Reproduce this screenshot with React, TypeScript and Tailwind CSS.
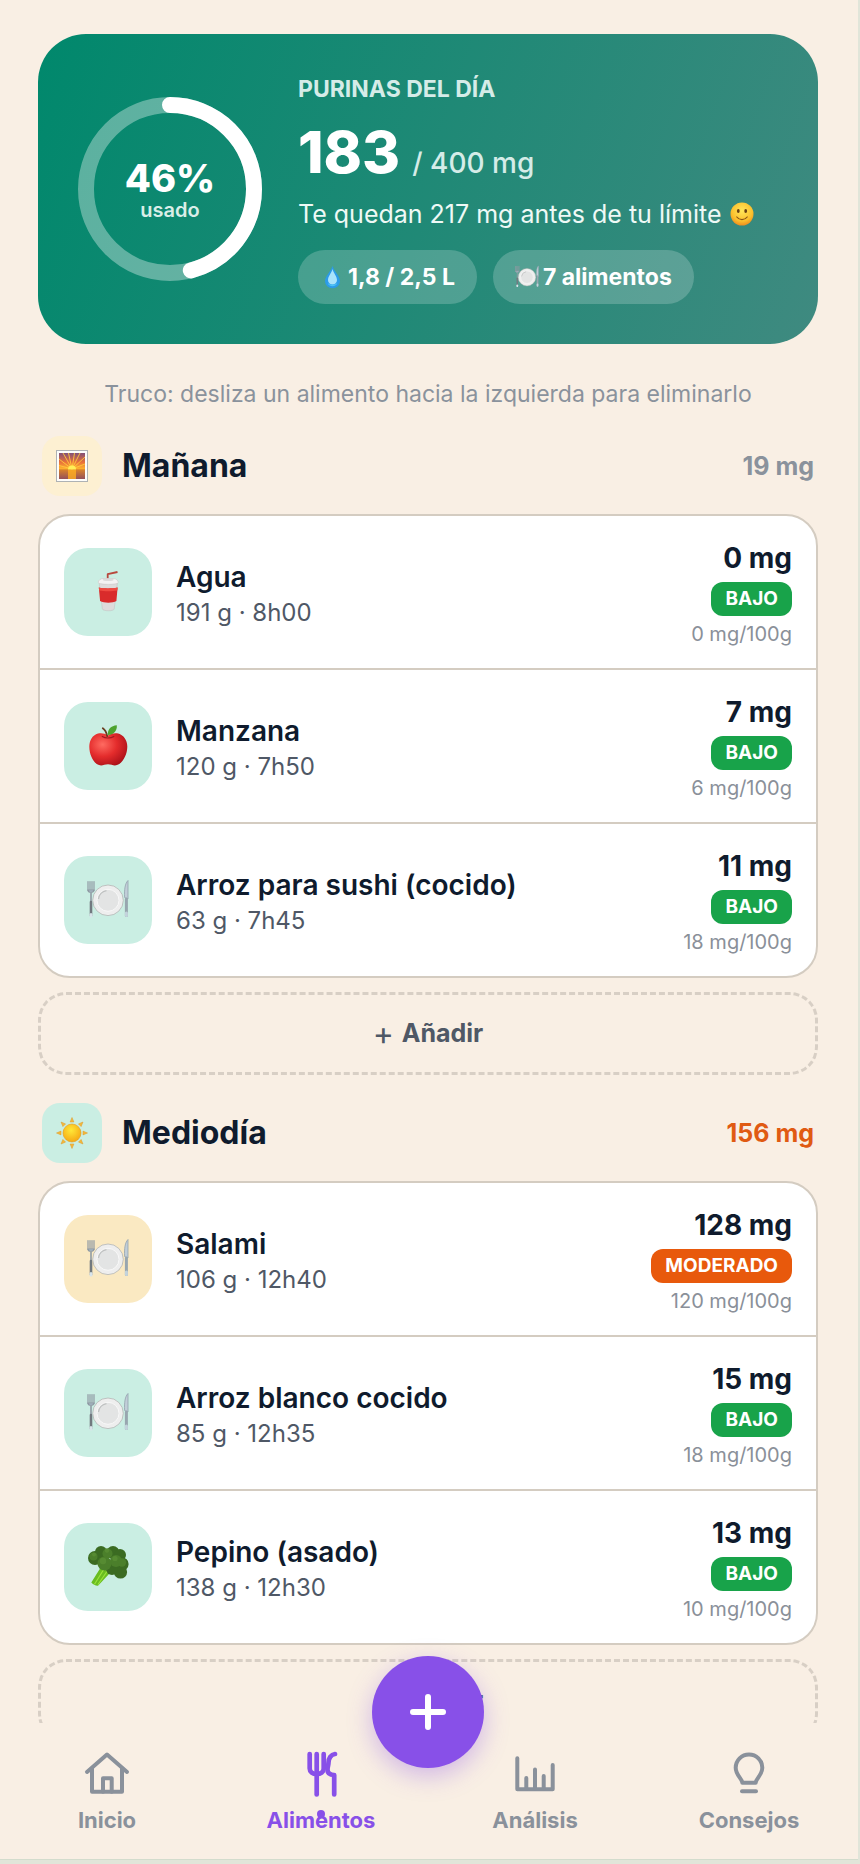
import { ReactNode } from 'react';
import { clsx } from 'clsx';

type Level = 'low' | 'moderate';

type Food = {
  name: string;
  detail: string;
  mg: string;
  per100: string;
  level: Level;
  icon: ReactNode;
};

function Plate({ className }: { className: string }) {
  return (
    <svg viewBox="0 0 42 42" className={className} aria-hidden="true">
      <g fill="none" stroke="#8f9aa3" strokeLinecap="round">
        <path d="M1 2.5v9M3 2.5v9M5 2.5v9M7 2.5v9" strokeWidth="1.2" />
        <path d="M1 11c0 3 6 3 6 0z" fill="#a9bccb" strokeWidth="1.2" />
        <path d="M4 14v9" strokeWidth="1.6" />
        <path d="M4 23v13.5" stroke="#71797f" strokeWidth="2.6" />
      </g>
      <path d="M4 35.5v1.500" stroke="#d8e4ea" strokeWidth="3" strokeLinecap="round" />
      <circle cx="21" cy="21.3" r="15.3" fill="#eeeeee" stroke="#b4b6b5" strokeWidth="0.8" />
      <circle cx="21" cy="21.3" r="11" fill="#e3e4e4" stroke="#f8f8f8" strokeWidth="1" />
      <path d="M11.5 20a9.6 9.6 0 0 1 8-8.3" fill="none" stroke="#bfc1c1" strokeWidth="1.3" />
      <path d="M41 1.5c-3 3-3.8 9-3.4 17l3.4 1.5z" fill="#c1ced8" stroke="#93a2ad" strokeWidth="0.8" />
      <path d="M39.4 20v16.5" stroke="#98a6af" strokeWidth="3" strokeLinecap="round" />
      <path d="M39.4 34v2.5" stroke="#c3d3dc" strokeWidth="3" strokeLinecap="round" />
    </svg>
  );
}

function Cup() {
  return (
    <svg viewBox="0 0 42 42" className="size-[42px]" aria-hidden="true">
      <path d="M20.7 9V3.2L30.5 1" fill="none" stroke="#b8473c" strokeWidth="1.8" strokeLinejoin="round" />
      <path d="M12.2 12h18.2l-3.2 26c-.3 2.3-11.4 2.3-11.8 0z" fill="#dedbdb" stroke="#c4c4c4" strokeWidth="0.6" />
      <path d="M11.8 16.5c5 1.2 13 1.2 18.8 0l-1.200 13.500c-3.500 2.200-12.500 2.200-16.300 0z" fill="#d92b2b" />
      <path d="M11.8 16.5c5 1.2 13 1.2 18.8 0l-.3 3c-5 1-13 1-18.200 0z" fill="#ef4a41" />
      <path d="M11.2 11.5c0-2 2.3-4 4.8-4h10.5c2.5 0 4.8 2 4.8 4 0 2.5-20.1 2.5-20.1 0z" fill="#f4f3f3" stroke="#c9c6c6" strokeWidth="0.6" />
      <ellipse cx="21.2" cy="8.8" rx="5.5" ry="1.2" fill="#dcdada" />
    </svg>
  );
}

function Apple() {
  return (
    <svg viewBox="0 0 42 42" className="size-[42px]" aria-hidden="true">
      <defs>
        <radialGradient id="apple" cx="35%" cy="35%" r="75%">
          <stop offset="0" stopColor="#ff6b61" />
          <stop offset="0.5" stopColor="#e42c2c" />
          <stop offset="1" stopColor="#a80f18" />
        </radialGradient>
      </defs>
      <path
        d="M21 10.5c4-2.5 9-3 13-.7 4 2.3 6.3 6.7 6.3 12 0 8-4.8 16.5-10.3 18.3-3.3 1-5.5-.8-9-.8s-5.7 1.8-9 .8C6.5 38.3 2.3 29.8 2.3 21.800c0-5.300 2-9.700 6-12 4-2.300 8.700-1.800 12.700.7z"
        fill="url(#apple)"
      />
      <path d="M15.3 11.5c3 2 8.5 2 11.5 0" fill="none" stroke="#a01820" strokeWidth="1.2" strokeLinecap="round" />
      <path d="M15.8 3.2c2 1.3 3.7 4.3 4.4 8" fill="none" stroke="#6b3d20" strokeWidth="1.8" strokeLinecap="round" />
      <path d="M20.8 10C20.5 4 24 .8 29.8.2c.7 5-3 9.6-9 9.8z" fill="#4da32f" />
    </svg>
  );
}

function Broccoli() {
  return (
    <svg viewBox="0 0 42 42" className="size-[42px]" aria-hidden="true">
      <path d="M14 21L4.3 36.5c1.5 2 4.5 3.5 6.7 3.3L22 28l7-5z" fill="#69bd20" />
      <path d="M17 23L7.5 38.2M21 24L11 38.5" stroke="#9be23c" strokeWidth="1.2" />
      <g fill="#3b6b22">
        <circle cx="8" cy="12" r="7" />
        <circle cx="14" cy="6" r="6" />
        <circle cx="26" cy="6.5" r="6.5" />
        <circle cx="33" cy="9" r="6" />
        <circle cx="35" cy="18" r="6.6" />
        <circle cx="33.5" cy="26" r="6.6" />
        <circle cx="25" cy="23" r="6" />
      </g>
      <g fill="#4b7f2b">
        <circle cx="20.5" cy="7.5" r="5" />
        <circle cx="6.5" cy="10.5" r="4" />
        <circle cx="29" cy="15" r="6" />
        <circle cx="17.5" cy="17.5" r="7" />
        <circle cx="35" cy="16.5" r="4.2" />
      </g>
      <g fill="#5c9136" opacity="0.7">
        <circle cx="16" cy="15" r="3.2" />
        <circle cx="28" cy="12.5" r="2.6" />
        <circle cx="20" cy="4.5" r="2.2" />
        <circle cx="7" cy="8.5" r="2" />
      </g>
    </svg>
  );
}

function Sunrise() {
  return (
    <svg viewBox="0 0 32 32" className="size-8" aria-hidden="true">
      <defs>
        <linearGradient id="dawn" x1="0" y1="0" x2="0" y2="1">
          <stop offset="0" stopColor="#805078" />
          <stop offset="0.35" stopColor="#e8703a" />
          <stop offset="0.62" stopColor="#ffb52e" />
          <stop offset="0.64" stopColor="#d9822b" />
          <stop offset="1" stopColor="#94505a" />
        </linearGradient>
      </defs>
      <rect x="0.5" y="0.5" width="31" height="31" fill="#fdfdfb" stroke="#aeb2b4" />
      <rect x="3" y="3" width="26" height="26" fill="url(#dawn)" />
      <path
        d="M16 19L3 15.5M16 19L3 9M16 19L7 3M16 19L12.5 3M16 19L18.5 3M16 19L24 3M16 19L29 7M16 19l13-5"
        stroke="#ffc83c"
        strokeWidth="0.9"
      />
      <path d="M12 19.5a4 4 0 0 1 8 0z" fill="#ffee58" />
      <path d="M12 20h8v9h-8z" fill="#ffae22" opacity="0.8" />
    </svg>
  );
}

function Sun() {
  return (
    <svg viewBox="0 0 32 32" className="size-8" aria-hidden="true">
      <defs>
        <radialGradient id="sun" cx="45%" cy="35%" r="65%">
          <stop offset="0" stopColor="#ffe838" />
          <stop offset="1" stopColor="#f6a914" />
        </radialGradient>
      </defs>
      {[0, 45, 90, 135, 180, 225, 270, 315].map((angle) => (
        <path key={angle} d="M16 0.5l1.9 4.5h-3.8z" fill="#f5b93a" stroke="#dc9a2c" strokeWidth="0.5" transform={`rotate(${angle} 16 16)`} />
      ))}
      <circle cx="16" cy="16" r="9" fill="url(#sun)" stroke="#e29a1c" strokeWidth="0.6" />
    </svg>
  );
}

function Drop() {
  return (
    <svg viewBox="0 0 24 24" className="size-6" aria-hidden="true">
      <path d="M12.5 1C14 6.5 20 11 20 16.2a7.5 7 0 0 1-15 0C5 11 11 6.5 12.5 1z" fill="#2c9be8" />
      <path d="M12.5 4c1 4 4.5 7.5 4.5 11a4.5 4.5 0 0 1-9 0c0-3.5 3.5-7 4.5-11z" fill="#a9e3fb" />
      <path d="M7.5 17.5c1.5 3 8.5 3 10 0-1 5-9 5-10 0z" fill="#4cc4f8" />
    </svg>
  );
}

function Smiley() {
  return (
    <svg viewBox="0 0 24 24" className="size-6" aria-hidden="true">
      <defs>
        <radialGradient id="smiley" cx="50%" cy="35%" r="65%">
          <stop offset="0" stopColor="#ffe65a" />
          <stop offset="0.7" stopColor="#fbc02d" />
          <stop offset="1" stopColor="#ee8e1e" />
        </radialGradient>
      </defs>
      <circle cx="12" cy="12" r="11.5" fill="url(#smiley)" />
      <ellipse cx="8.3" cy="9" rx="1.4" ry="2" fill="#6a4012" />
      <ellipse cx="15.7" cy="9" rx="1.4" ry="2" fill="#6a4012" />
      <path d="M6.8 15c2.5 3.4 7.9 3.4 10.4 0" fill="none" stroke="#8a5416" strokeWidth="1.2" strokeLinecap="round" />
    </svg>
  );
}

const morning: Food[] = [
  { name: 'Agua', detail: '191 g · 8h00', mg: '0 mg', per100: '0 mg/100g', level: 'low', icon: <Cup /> },
  { name: 'Manzana', detail: '120 g · 7h50', mg: '7 mg', per100: '6 mg/100g', level: 'low', icon: <Apple /> },
  { name: 'Arroz para sushi (cocido)', detail: '63 g · 7h45', mg: '11 mg', per100: '18 mg/100g', level: 'low', icon: <Plate className="size-[42px]" /> },
];

const noon: Food[] = [
  { name: 'Salami', detail: '106 g · 12h40', mg: '128 mg', per100: '120 mg/100g', level: 'moderate', icon: <Plate className="size-[42px]" /> },
  { name: 'Arroz blanco cocido', detail: '85 g · 12h35', mg: '15 mg', per100: '18 mg/100g', level: 'low', icon: <Plate className="size-[42px]" /> },
  { name: 'Pepino (asado)', detail: '138 g · 12h30', mg: '13 mg', per100: '10 mg/100g', level: 'low', icon: <Broccoli /> },
];

function FoodRow({ food }: { food: Food }) {
  const moderate = food.level === 'moderate';
  return (
    <li className="flex h-[154px] items-center gap-6 border-b-2 border-[#d4ccc1] px-6 last:h-[152px] last:border-b-0">
      <div className={clsx('flex size-[88px] shrink-0 items-center justify-center rounded-3xl', moderate ? 'bg-[#fae9c2]' : 'bg-[#caeee3]')}>
        {food.icon}
      </div>
      <div className="min-w-0 flex-1 pt-1.5">
        <h3 className="text-[28px] leading-9 font-semibold text-[#0f1b2d]">{food.name}</h3>
        <p className="text-2xl leading-9 text-[#4f5866]">{food.detail}</p>
      </div>
      <div className="flex flex-col items-end pt-0.5">
        <span className="text-[28px] leading-10 font-bold text-[#0f1b2d]">{food.mg}</span>
        <span className={clsx('mt-1 flex h-[34px] items-center rounded-xl px-3.5 text-[19px] font-bold text-white', moderate ? 'bg-[#e8590c]' : 'bg-[#18a34a]')}>
          {moderate ? 'MODERADO' : 'BAJO'}
        </span>
        <span className="mt-1 text-xl leading-7 text-[#8a9099]">{food.per100}</span>
      </div>
    </li>
  );
}

type MealProps = {
  title: string;
  total: string;
  high?: boolean;
  icon: ReactNode;
  foods: Food[];
};

function Meal({ title, total, high, icon, foods }: MealProps) {
  return (
    <section>
      <div className="flex items-center gap-5 px-1">
        <div className={clsx('flex size-[60px] items-center justify-center rounded-[18px]', high ? 'bg-[#caeee3]' : 'bg-[#fdf0d2]')}>
          {icon}
        </div>
        <h2 className="flex-1 text-[32px] leading-10 font-bold text-[#0f1b2d]">{title}</h2>
        <span className={clsx('text-[25px] leading-9 font-bold', high ? 'text-[#e05a12]' : 'text-[#8a929c]')}>{total}</span>
      </div>
      <ul className="mt-[18px] overflow-hidden rounded-[32px] border-2 border-[#d4ccc1] bg-white">
        {foods.map((food) => (
          <FoodRow key={food.name} food={food} />
        ))}
      </ul>
      <button className="mt-3.5 flex h-[83px] w-full items-center justify-center gap-2 rounded-[28px] border-3 border-dashed border-[#d8cfc5] text-[25px] font-bold text-[#4f5866]">
        <span className="text-[32px] leading-8 font-normal">+</span>
        Añadir
      </button>
    </section>
  );
}

function NavItem({ label, active, children }: { label: string; active?: boolean; children: ReactNode }) {
  return (
    <a
      href="#"
      aria-current={active ? 'page' : undefined}
      className={clsx('relative flex flex-1 flex-col items-center gap-2 pt-[27px] pb-[25px]', active ? 'text-[#8850e8]' : 'text-[#8a919b]')}
    >
      <svg viewBox="0 0 48 48" className="size-12" fill="none" stroke="currentColor" strokeWidth="4" strokeLinecap="round" strokeLinejoin="round" aria-hidden="true">
        {children}
      </svg>
      <span className="text-[22px] leading-7 font-bold">{label}</span>
      {active && <span className="absolute top-[87px] left-1/2 size-2 -translate-x-1/2 rounded-full bg-[#8850e8]" />}
    </a>
  );
}

export default function App() {
  return (
    <div className="h-screen bg-[#e1e5d9] pr-0.5 pb-1 font-['Inter',sans-serif]">
      <div className="flex h-full flex-col border-b border-[#d3dccd] bg-[#f9efe4]">
        <main className="min-h-0 flex-1 overflow-hidden pt-[34px] pr-10 pl-[38px]">
          <section className="flex items-center gap-9 rounded-[48px] bg-linear-110/srgb from-[#00886c] to-[#3f8a80] p-10 text-white">
            <div className="grid size-[184px] shrink-0 place-items-center">
              <svg viewBox="0 0 184 184" className="col-start-1 row-start-1 size-full -rotate-90" fill="none" strokeWidth="16" aria-hidden="true">
                <circle cx="92" cy="92" r="84" stroke="#ffffff" strokeOpacity="0.35" />
                <circle cx="92" cy="92" r="84" stroke="#ffffff" strokeLinecap="round" pathLength="100" strokeDasharray="46 100" />
              </svg>
              <div className="col-start-1 row-start-1 flex flex-col items-center pt-1.5">
                <span className="text-[38px] leading-9 font-extrabold">46%</span>
                <span className="text-xl leading-7 font-semibold text-[#d9eee8]">usado</span>
              </div>
            </div>
            <div className="min-w-0">
              <h1 className="text-[23px] leading-[30px] font-bold text-[#d5ece8]">PURINAS DEL DÍA</h1>
              <p className="mt-3 flex h-[72px] items-baseline gap-3">
                <span className="text-[58px] leading-[72px] font-extrabold">183</span>
                <span className="text-[28px] leading-9 font-medium text-[#d5ece8]">/ 400 mg</span>
              </p>
              <p className="mt-2 flex items-center gap-2 text-[25px] leading-9 text-[#eef9f6]">
                Te quedan 217 mg antes de tu límite <Smiley />
              </p>
              <div className="mt-[18px] flex gap-4 text-[23px] font-bold">
                <span className="flex h-[54px] items-center gap-1 rounded-full bg-white/20 px-[22px]">
                  <Drop /> 1,8 / 2,5 L
                </span>
                <span className="flex h-[54px] items-center gap-1 rounded-full bg-white/20 px-[22px]">
                  <Plate className="size-6" /> 7 alimentos
                </span>
              </div>
            </div>
          </section>

          <p className="mt-8 mb-6 text-center text-[23px] leading-9 text-[#8a929c]">Truco: desliza un alimento hacia la izquierda para eliminarlo</p>

          <div className="flex flex-col gap-7">
            <Meal title="Mañana" total="19 mg" icon={<Sunrise />} foods={morning} />
            <Meal title="Mediodía" total="156 mg" high icon={<Sun />} foods={noon} />
          </div>
        </main>

        <nav className="relative mr-0.5 flex">
          <NavItem label="Inicio">
            <path d="M4 22L24 4.5 44 22" />
            <path d="M9 18.5v23.2h30V18.5" />
            <path d="M20 41.7V28.3h8.7v13.4" />
          </NavItem>
          <NavItem label="Alimentos" active>
            <g strokeWidth="4.7">
              <path d="M12.7 4v14.5c0 3.5 3 5.5 7 5.5s7-2 7-5.5V4" />
              <path d="M19.7 4v40.5" />
              <path d="M38 4c-4 .5-6.5 4.5-6.5 8.5 0 2.5-1 4.5-1 7 0 4 2.5 5.500 6.700 5.500v19.500" />
            </g>
          </NavItem>
          <NavItem label="Análisis">
            <path d="M6.3 8.3v31h35.4V15" />
            <path d="M15.3 39V28M24 39V19.5M32.7 39V26" />
          </NavItem>
          <NavItem label="Consejos">
            <path d="M17.3 32.7c0-4-6.6-7.5-6.6-15a13.3 13.3 0 0 1 26.6 0c0 7.5-6.6 11-6.6 15z" />
            <path d="M17 41.3h14" />
          </NavItem>
          <button
            aria-label="Añadir alimento"
            className="absolute -top-[67px] left-1/2 flex size-28 -translate-x-1/2 items-center justify-center rounded-full bg-[#8850e8] shadow-[0_8px_24px_rgba(136,80,232,0.35)]"
          >
            <svg viewBox="0 0 36 36" className="size-9" stroke="#ffffff" strokeWidth="6" strokeLinecap="round" aria-hidden="true">
              <path d="M3 18h30M18 3v30" />
            </svg>
          </button>
        </nav>
      </div>
    </div>
  );
}
